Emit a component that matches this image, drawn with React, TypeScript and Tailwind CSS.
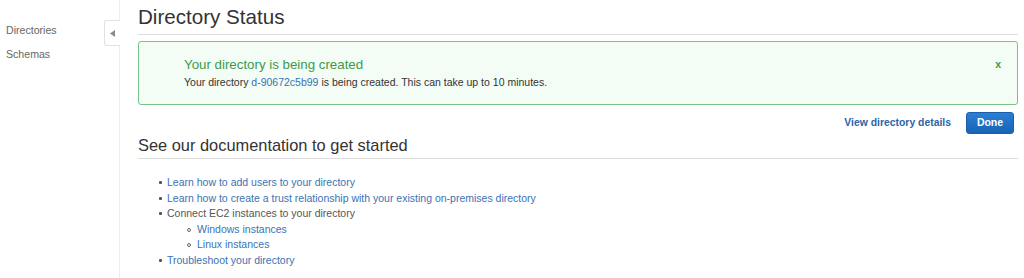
import React from 'react';

const links = 'text-[#3a72b5]';

const Item: React.FC<{ sub?: boolean; className?: string; children: React.ReactNode }> = ({ sub, className, children }) => (
  <li className={`flex items-center ${sub ? 'pl-[30px]' : ''}`}>
    {sub ? (
      <span className="mr-[6px] ml-[19px] h-[4px] w-[4px] rounded-full border border-[#666]" />
    ) : (
      <span className="mr-[5px] ml-[21px] h-[3px] w-[3px] rounded-[1px] bg-[#555]" />
    )}
    <span className={className}>{children}</span>
  </li>
);

const App: React.FC = () => {
  return (
    <div className="flex h-[278px] w-[1024px] bg-white font-['Liberation_Sans',Arial,sans-serif] text-[#444]">
      {/* Sidebar */}
      <div className="relative w-[120px] shrink-0 border-r border-[#ececec] pt-[23px] pl-[6px] text-[10.6px] text-[#666]">
        <div className="leading-[15px]">Directories</div>
        <div className="mt-[9px] leading-[15px]">Schemas</div>
        <div className="absolute right-[-1px] top-[20px] flex h-[26px] w-[16px] items-center justify-center rounded-l-[3px] border border-r-0 border-[#e2e2e2] bg-white">
          <svg width="5" height="7" viewBox="0 0 5 7">
            <path d="M5 0 L0 3.5 L5 7 Z" fill="#8a8a8a" />
          </svg>
        </div>
      </div>

      {/* Main */}
      <div className="flex-1 pl-[18px] pr-[6px]">
        <h1 className="border-b border-[#ddd] pt-[5px] pb-[5px] text-[20.6px] leading-[24px] text-[#333]">
          Directory Status
        </h1>

        <div className="mt-[6px] flex h-[64px] items-start rounded-[3px] border border-[#78c28a] bg-[#f3fcf5] pl-[45px] pr-[16px]">
          <div className="flex-1 pt-[14px]">
            <div className="text-[13.3px] leading-[17px] text-[#3c9a4e]">Your directory is being created</div>
            <div className="mt-[2px] text-[10.5px] leading-[14px] text-[#333]">
              Your directory <span className={links}>d-90672c5b99</span> is being created. This can take up to 10 minutes.
            </div>
          </div>
          <div className="pt-[15px] text-[10.5px] font-bold text-[#3c9a4e]">x</div>
        </div>

        <div className="mt-[7px] flex items-center justify-end gap-[15px] pr-[4px]">
          <span className="text-[10.4px] font-bold text-[#2d64a8]">View directory details</span>
          <button className="h-[22px] w-[48px] rounded-[3px] border border-[#1a5fa8] bg-gradient-to-b from-[#2a7fd4] to-[#1864b6] text-[10.5px] font-bold text-white">
            Done
          </button>
        </div>

        <h2 className="mt-[1px] border-b border-[#ddd] pb-[3px] text-[16.4px] leading-[20px] text-[#333]">
          See our documentation to get started
        </h2>

        <ul className="mt-[16px] text-[10.5px] leading-[15.6px]">
          <Item className={links}>Learn how to add users to your directory</Item>
          <Item className={links}>Learn how to create a trust relationship with your existing on-premises directory</Item>
          <Item className="text-[#555]">Connect EC2 instances to your directory</Item>
          <Item sub className={links}>Windows instances</Item>
          <Item sub className={links}>Linux instances</Item>
          <Item className={links}>Troubleshoot your directory</Item>
        </ul>
      </div>
    </div>
  );
};

export default App;
